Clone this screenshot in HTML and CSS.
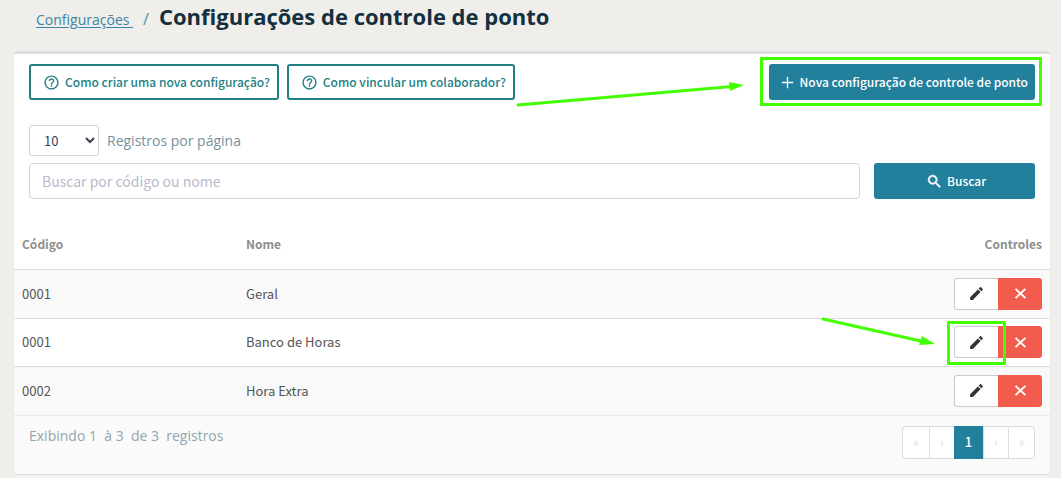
FILE: index.html
```html
<!DOCTYPE html>
<html lang="pt-BR">
<head>
<meta charset="utf-8">
<meta name="viewport" content="width=device-width, initial-scale=1">
<title>Configurações de controle de ponto</title>
<link rel="stylesheet" href="styles.css">
</head>
<body>
<svg class="sprite" aria-hidden="true">
  <symbol id="i-help" viewBox="0 0 24 24"><path d="M11 18h2v-2h-2v2zm1-16C6.480 2 2 6.480 2 12s4.480 10 10 10 10-4.480 10-10S17.520 2 12 2zm0 18c-4.410 0-8-3.590-8-8s3.590-8 8-8 8 3.590 8 8-3.590 8-8 8zm0-14c-2.210 0-4 1.790-4 4h2c0-1.100.9-2 2-2s2 .9 2 2c0 2-3 1.750-3 5h2c0-2.250 3-2.500 3-5 0-2.210-1.790-4-4-4z"/></symbol>
  <symbol id="i-plus" viewBox="0 0 24 24"><path d="M20 12.900h-7.100V20h-1.800v-7.100H4v-1.800h7.100V4h1.800v7.100H20z"/></symbol>
  <symbol id="i-search" viewBox="0 0 24 24"><path stroke="currentColor" stroke-width=".8" d="M15.500 14h-.79l-.28-.27C15.410 12.590 16 11.110 16 9.500 16 5.910 13.090 3 9.500 3S3 5.910 3 9.500 5.910 16 9.500 16c1.610 0 3.090-.59 4.230-1.570l.27.28v.79l5 4.990L20.490 19l-4.990-5zm-6 0C7.010 14 5 11.990 5 9.500S7.010 5 9.500 5 14 7.010 14 9.500 11.990 14 9.500 14z"/></symbol>
  <symbol id="i-edit" viewBox="0 0 24 24"><path d="M3 17.250V21h3.750L17.810 9.940l-3.750-3.750L3 17.250zM20.710 7.040c.39-.39.39-1.020 0-1.410l-2.340-2.340c-.39-.39-1.020-.39-1.410 0l-1.830 1.830 3.750 3.750 1.830-1.830z"/></symbol>
  <symbol id="i-close" viewBox="0 0 24 24"><path fill="none" stroke="currentColor" stroke-width="2.800" d="M5 5.500L19 18.500M19 5.500L5 18.500"/></symbol>
</svg>

<header class="page-head">
  <nav class="crumbs"><a class="crumb-link" href="#">Configurações&nbsp;</a><span class="crumb-sep">/</span></nav>
  <h1 class="page-title">Configurações de controle de ponto</h1>
</header>

<main class="page-body">
  <section class="card">
    <div class="toolbar">
      <button class="btn btn-outline" type="button"><svg class="icon icon-help"><use href="#i-help"/></svg>Como criar uma nova configuração?</button>
      <button class="btn btn-outline" type="button"><svg class="icon icon-help"><use href="#i-help"/></svg>Como vincular um colaborador?</button>
      <div class="toolbar-end">
        <button class="btn btn-primary" type="button"><svg class="icon icon-plus"><use href="#i-plus"/></svg>Nova configuração de controle de ponto</button>
        <span class="marker marker-new"></span>
        <svg class="arrow arrow-new" viewBox="0 0 228 26" aria-hidden="true"><path class="arrow-line" d="M2 22L216 3.500"/><path class="arrow-head" d="M213 -1L228 2L214 8z"/></svg>
      </div>
    </div>

    <div class="filters">
      <div class="page-size">
        <select class="select" id="page-size"><option>10</option><option>25</option><option>50</option></select>
        <label class="muted" for="page-size">Registros por página</label>
      </div>
      <form class="search">
        <input class="search-input" type="text" placeholder="Buscar por código ou nome" aria-label="Buscar por código ou nome">
        <button class="btn btn-primary btn-search" type="button"><svg class="icon icon-search"><use href="#i-search"/></svg>Buscar</button>
      </form>
    </div>

    <table class="table">
      <thead>
        <tr><th class="col-code" scope="col">Código</th><th scope="col">Nome</th><th class="col-actions" scope="col">Controles</th></tr>
      </thead>
      <tbody>
        <tr>
          <td>0001</td><td>Geral</td>
          <td><div class="actions"><button class="act act-edit" type="button" aria-label="Editar"><svg class="icon icon-act"><use href="#i-edit"/></svg></button><button class="act act-delete" type="button" aria-label="Excluir"><svg class="icon icon-act"><use href="#i-close"/></svg></button></div></td>
        </tr>
        <tr>
          <td>0001</td><td>Banco de Horas</td>
          <td><div class="actions"><button class="act act-edit" type="button" aria-label="Editar"><svg class="icon icon-act"><use href="#i-edit"/></svg></button><button class="act act-delete" type="button" aria-label="Excluir"><svg class="icon icon-act"><use href="#i-close"/></svg></button><span class="marker marker-edit"></span><svg class="arrow arrow-edit" viewBox="0 0 114 32" aria-hidden="true"><path class="arrow-line" d="M2 3L102 25.500"/><path class="arrow-head" d="M101 20L114 28L98 29z"/></svg></div></td>
        </tr>
        <tr>
          <td>0002</td><td>Hora Extra</td>
          <td><div class="actions"><button class="act act-edit" type="button" aria-label="Editar"><svg class="icon icon-act"><use href="#i-edit"/></svg></button><button class="act act-delete" type="button" aria-label="Excluir"><svg class="icon icon-act"><use href="#i-close"/></svg></button></div></td>
        </tr>
      </tbody>
    </table>

    <footer class="card-foot">
      <p class="summary">Exibindo 1 &nbsp;à 3 &nbsp;de 3 &nbsp;registros</p>
      <nav class="pager" aria-label="Paginação">
        <button class="page page-wide" type="button" disabled>«</button>
        <button class="page" type="button" disabled>‹</button>
        <button class="page page-current" type="button" aria-current="page">1</button>
        <button class="page" type="button" disabled>›</button>
        <button class="page page-wide" type="button" disabled>»</button>
      </nav>
    </footer>
  </section>
</main>
</body>
</html>
```

FILE: styles.css
```css
* { box-sizing: border-box; }

:root {
  --teal: #22809c;
  --teal-dark: #217f86;
  --line: #dcdcdf;
  --green: #44ff00;
  --source: "Source Sans Pro", "Noto Sans CJK SC", sans-serif;
  --open: "Open Sans", "Noto Sans", sans-serif;
}

body {
  margin: 0;
  background: #efeeea;
  font-family: var(--source);
  font-size: 14px;
  line-height: 20px;
  color: #555;
}

.sprite { display: none; }
.icon { flex: none; fill: currentColor; }

.page-head {
  display: flex;
  align-items: baseline;
  gap: 10px;
  height: 51px;
  padding: 1px 36px 0;
  font-family: var(--open);
}
.crumbs { display: flex; align-items: baseline; gap: 10px; }
.crumb-link { color: #3f83a6; text-underline-offset: 2px; }
.crumb-sep { color: #3f93b3; font-size: 16px; }
.page-title {
  margin: 0;
  font-size: 22px;
  line-height: 30px;
  font-weight: 700;
  color: #14303f;
}

.page-body { margin: 0 11px 0 14px; background: #f3f3f5; padding-bottom: 4px; }
.card {
  background: #fff;
  border-top: 3px solid #dedede;
  border-radius: 4px;
  box-shadow: 0 1px 1px #d5d8dc;
}

.toolbar { display: flex; gap: 8px; padding: 10px 15px 0; }
.toolbar-end { position: relative; margin-left: auto; }

.btn {
  display: flex;
  align-items: center;
  height: 36px;
  border-radius: 3px;
  font: 500 12px/20px var(--source);
  white-space: nowrap;
}
.btn-outline {
  padding: 0 7px 0 12px;
  gap: 5px;
  border: 2px solid var(--teal-dark);
  background: #fff;
  color: var(--teal-dark);
}
.btn-primary {
  padding: 0 7px 0 10px;
  gap: 4px;
  border: 0;
  background: var(--teal);
  color: #fff;
}
.icon-help { width: 17px; height: 17px; }
.icon-plus, .icon-search { width: 17px; height: 17px; }

.filters { padding: 25px 15px 21px; }
.page-size { display: flex; align-items: center; gap: 8px; margin-bottom: 7px; }
.muted { font-family: var(--open); color: #78909c; }
.select {
  width: 70px;
  height: 31px;
  padding: 0 0 0 10px;
  border: 1px solid #d5d5d8;
  border-radius: 3px;
  background: #fff;
  color: #3d3d55;
  font: 13px/20px var(--source);
}
.search { display: flex; gap: 14px; }
.search-input {
  flex: 1;
  min-width: 0;
  height: 36px;
  padding: 0 12px;
  border: 1px solid #d5d5d8;
  border-radius: 4px;
  font: 14px/24px var(--source);
  color: #444;
}
.search-input::placeholder { color: #b9b9cc; opacity: 1; }
.btn-search { width: 161px; justify-content: center; }

.table { width: 100%; border-collapse: collapse; table-layout: fixed; }
.table th, .table td {
  padding: 0 8px;
  border-bottom: 1px solid var(--line);
  text-align: left;
  font-size: 13px;
}
.table th { height: 49px; font-size: 12px; font-weight: 700; color: #8e8e8e; }
.table td { height: 49px; color: #555; }
.table tbody tr:nth-child(even) td { height: 48px; }
.table tbody tr:nth-child(odd) { background: #f9f9f9; }
.table tbody tr:last-child td { border-bottom-color: #e9e9eb; }
.table .col-code { width: 224px; }
.table .col-actions { width: 140px; text-align: right; }

.actions { position: relative; display: flex; justify-content: flex-end; }
.act {
  display: flex;
  align-items: center;
  justify-content: center;
  width: 44px;
  height: 32px;
  padding: 0;
}
.act-edit { border: 1px solid #ccc; border-right: 0; border-radius: 3px 0 0 3px; background: #fff; color: #333; }
.act-delete { border: 0; border-radius: 0 3px 3px 0; background: #f25c4d; color: #fff; }
.icon-act { width: 17px; height: 17px; }

.card-foot {
  display: flex;
  justify-content: space-between;
  padding: 10px 15px 15px;
  border-radius: 0 0 4px 4px;
  background: #fafafa;
}
.summary { margin: 0; font-family: var(--open); color: #93a5ae; }
.pager { display: flex; }
.page {
  width: 25px;
  height: 33px;
  padding: 0;
  border: 1px solid var(--line);
  border-right: 0;
  background: #fff;
  color: #dde4e8;
  font: 13px/20px var(--source);
}
.page-wide { width: 27px; }
.page:first-child { border-radius: 4px 0 0 4px; }
.page:last-child { border-right: 1px solid var(--line); border-radius: 0 4px 4px 0; }
.page-current { width: 29px; border: 0; background: var(--teal); color: #fff; font-weight: 500; }

.marker { position: absolute; border: 3px solid var(--green); border-radius: 1px; pointer-events: none; }
.marker-new { inset: -7px -7px -6px -9px; }
.marker-edit { top: -5px; right: 36px; width: 59px; height: 44px; }
.arrow { position: absolute; overflow: visible; pointer-events: none; }
.arrow-line { fill: none; stroke: var(--green); stroke-width: 3; stroke-linecap: round; }
.arrow-head { fill: var(--green); }
.arrow-new { width: 228px; height: 26px; right: 291px; top: 19px; }
.arrow-edit { width: 114px; height: 32px; right: 107px; top: -10px; }
```
